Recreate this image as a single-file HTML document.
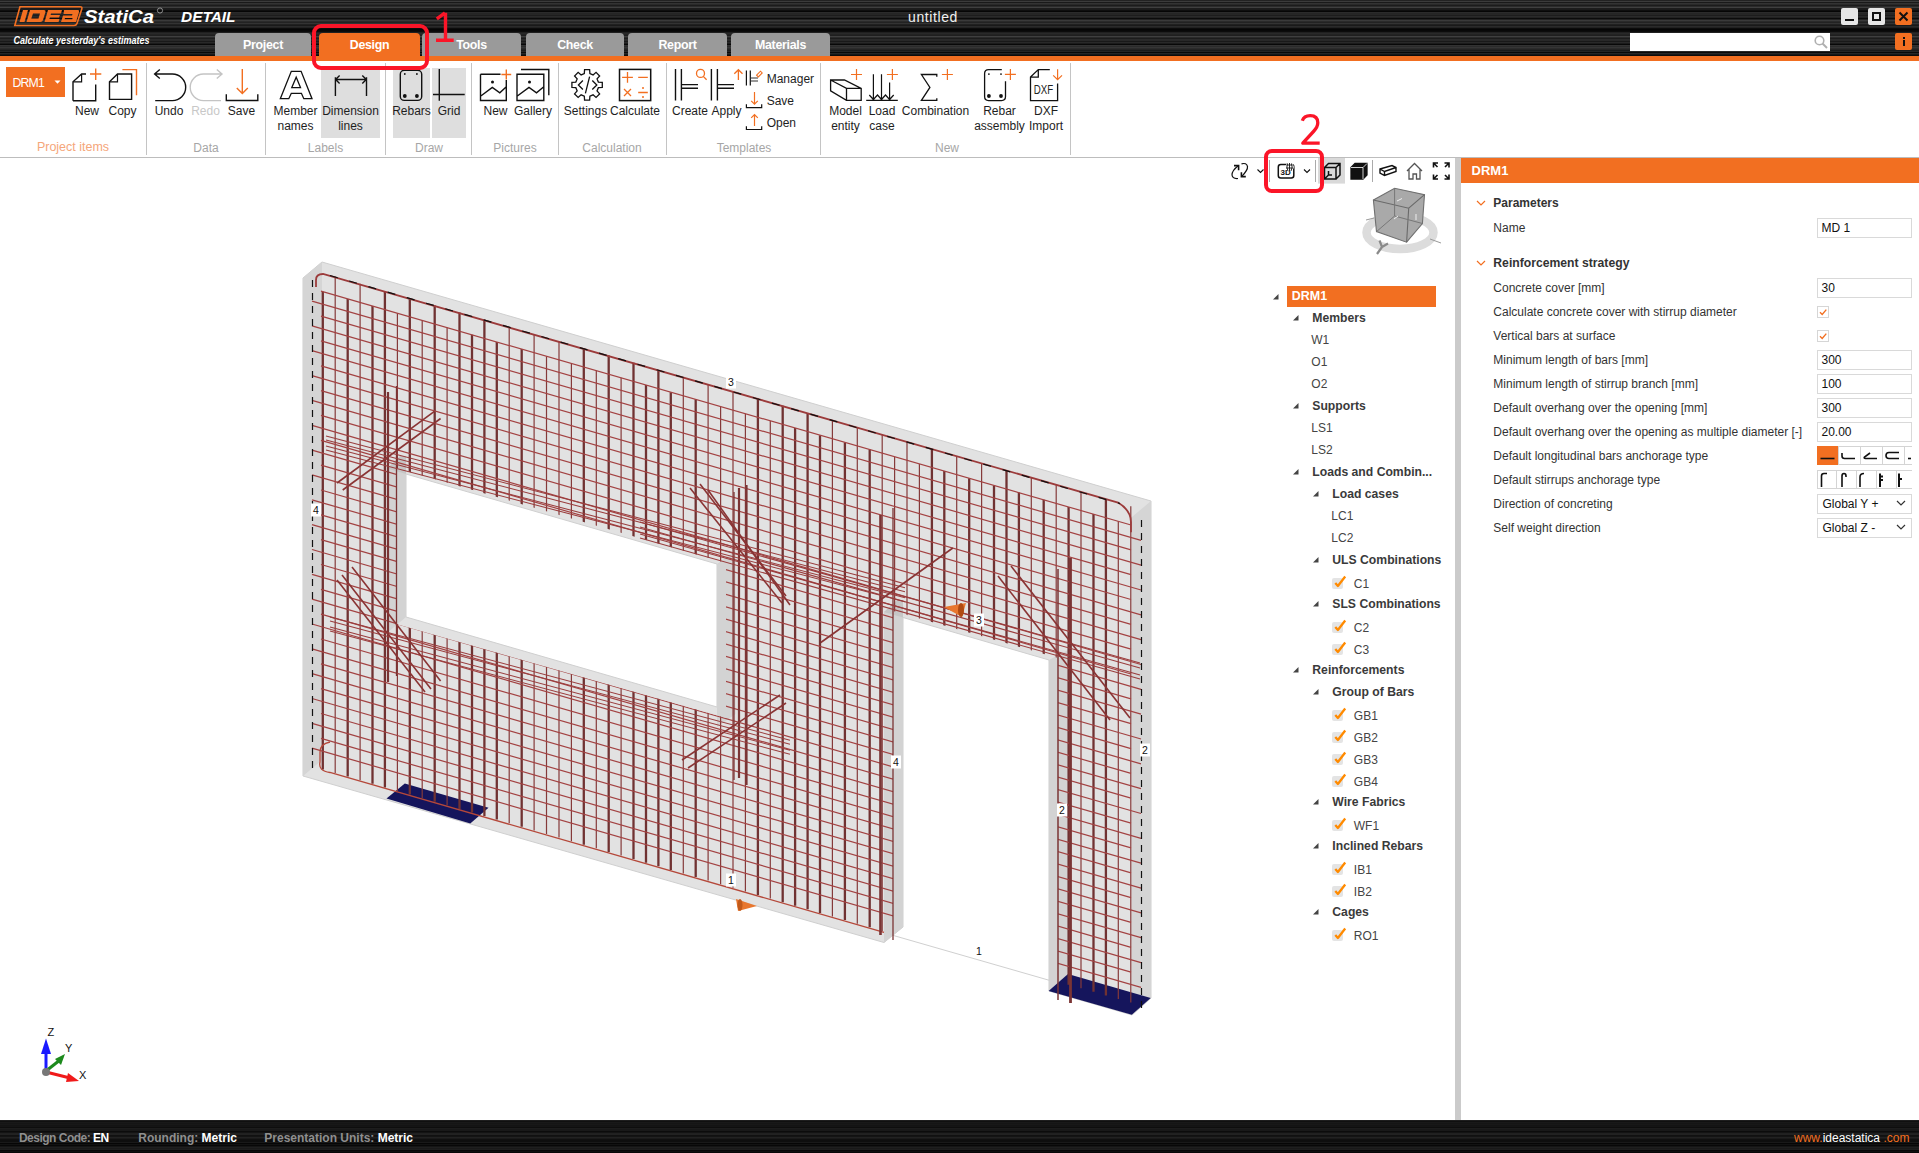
<!DOCTYPE html><html><head><meta charset="utf-8"><style>
*{margin:0;padding:0;box-sizing:content-box}
html,body{width:1919px;height:1153px;overflow:hidden;background:#fff;font-family:"Liberation Sans",sans-serif;position:relative}
.t{position:absolute;white-space:nowrap;line-height:1}
#hdr{position:absolute;left:0;top:0;width:1919px;height:56px;background:linear-gradient(180deg,#222222 0px,#222222 1px,#3b3b3b 1px,#3b3b3b 2px,#191919 2px,#191919 3px,#333333 3px,#333333 4px,#292929 4px,#292929 5px,#1b1b1b 5px,#1b1b1b 6px,#2a2a2a 6px,#2a2a2a 7px,#3f3f3f 7px,#3f3f3f 8px,#1c1c1c 8px,#1c1c1c 9px,#1b1b1b 9px,#1b1b1b 10px,#0e0e0e 10px,#0e0e0e 11px,#060606 11px,#060606 12px,#2b2b2b 12px,#2b2b2b 13px,#252525 13px,#252525 14px,#262626 14px,#262626 15px,#1d1d1d 15px,#1d1d1d 16px,#2a2a2a 16px,#2a2a2a 17px,#222222 17px,#222222 18px,#0b0b0b 18px,#0b0b0b 19px,#222222 19px,#222222 20px,#3a3a3a 20px,#3a3a3a 21px,#2a2a2a 21px,#2a2a2a 22px,#222222 22px,#222222 23px,#333333 23px,#333333 24px,#202020 24px,#202020 25px,#191919 25px,#191919 26px,#2a2a2a 26px,#2a2a2a 27px,#212121 27px,#212121 28px,#0c0c0c 28px,#0c0c0c 29px,#050505 29px,#050505 30px,#080808 30px,#080808 31px,#0c0c0c 31px,#0c0c0c 32px,#202020 32px,#202020 33px,#292929 33px,#292929 34px,#232323 34px,#232323 35px,#1f1f1f 35px,#1f1f1f 36px,#3f3f3f 36px,#3f3f3f 37px,#2a2a2a 37px,#2a2a2a 38px,#1c1c1c 38px,#1c1c1c 39px,#2a2a2a 39px,#2a2a2a 40px,#282828 40px,#282828 41px,#191919 41px,#191919 42px,#292929 42px,#292929 43px,#1b1b1b 43px,#1b1b1b 44px,#080808 44px,#080808 45px,#323232 45px,#323232 46px,#2a2a2a 46px,#2a2a2a 47px,#353535 47px,#353535 48px,#2b2b2b 48px,#2b2b2b 49px,#232323 49px,#232323 50px,#1b1b1b 50px,#1b1b1b 51px,#262626 51px,#262626 52px,#0a0a0a 52px,#0a0a0a 53px,#272727 53px,#272727 54px,#181818 54px,#181818 55px,#0d0d0d 55px,#0d0d0d 56px)}
#stat{position:absolute;left:0;top:1120px;width:1919px;height:33px;background:linear-gradient(180deg,#1e1e1e 0px,#1e1e1e 1px,#101010 1px,#101010 2px,#191919 2px,#191919 3px,#151515 3px,#151515 4px,#181818 4px,#181818 5px,#141414 5px,#141414 6px,#151515 6px,#151515 7px,#0e0e0e 7px,#0e0e0e 8px,#1d1d1d 8px,#1d1d1d 9px,#191919 9px,#191919 10px,#191919 10px,#191919 11px,#0c0c0c 11px,#0c0c0c 12px,#141414 12px,#141414 13px,#212121 13px,#212121 14px,#222222 14px,#222222 15px,#111111 15px,#111111 16px,#141414 16px,#141414 17px,#222222 17px,#222222 18px,#1a1a1a 18px,#1a1a1a 19px,#101010 19px,#101010 20px,#0e0e0e 20px,#0e0e0e 21px,#0e0e0e 21px,#0e0e0e 22px,#191919 22px,#191919 23px,#060606 23px,#060606 24px,#121212 24px,#121212 25px,#080808 25px,#080808 26px,#151515 26px,#151515 27px,#1f1f1f 27px,#1f1f1f 28px,#191919 28px,#191919 29px,#1e1e1e 29px,#1e1e1e 30px,#070707 30px,#070707 31px,#0e0e0e 31px,#0e0e0e 32px,#070707 32px,#070707 33px)}
</style></head><body>
<div id="hdr"></div>
<div style="position:absolute;left:0;top:56px;width:1919px;height:5px;background:#f26f21"></div>
<svg style="position:absolute;left:0;top:0" width="240" height="56">
<g transform="translate(14,6)">
<path d="M6 0.8 H66 Q68.5 0.8 67.8 3 L63 17.5 Q62.3 19.5 60 19.5 H0.8 L6 0.8Z" fill="none" stroke="#f26f21" stroke-width="1.6"/>
<path d="M9 4 H14 L10.5 16 H5.5Z" fill="#f26f21"/>
<path d="M16 4 H30 Q32 4 31.5 6 L29 14 Q28.5 16 26.5 16 H12.5Z M19 7.5 L17.3 12.5 H24.5 L26 7.5Z" fill="#f26f21" fill-rule="evenodd"/>
<path d="M34 4 H48 L47 7.5 H37 L36.6 9 H46 L45 11.5 H35.9 L35.4 13 H45.5 L44.6 16 H30.5Z" fill="#f26f21"/>
<path d="M50 4 H64 Q65.5 4 65 6 L62 16 H47 L49 9.5 H58 L58.5 8 H49.5Z M51 12 L50.6 13.3 H58.2 L58.6 12Z" fill="#f26f21" fill-rule="evenodd"/>
</g>
<text x="84" y="23" font-family="Liberation Sans" font-style="italic" font-weight="bold" font-size="18" fill="#fff" textLength="70" lengthAdjust="spacingAndGlyphs">StatiCa</text>
<circle cx="160" cy="10.5" r="2.6" fill="none" stroke="#aaa" stroke-width="0.8"/>
<text x="13.5" y="43.5" font-family="Liberation Sans" font-style="italic" font-weight="bold" font-size="10" fill="#fff" textLength="136" lengthAdjust="spacingAndGlyphs">Calculate yesterday's estimates</text>
<text x="181" y="22" font-family="Liberation Sans" font-style="italic" font-weight="bold" font-size="15.5" fill="#fff" textLength="54.5" lengthAdjust="spacingAndGlyphs">DETAIL</text>
</svg>
<div class="t" style="left:908px;top:9.95px;font-size:14px;font-weight:normal;color:#f0f0f0;letter-spacing:0.6px">untitled</div>
<div style="position:absolute;left:1841px;top:8px;width:17px;height:17px;background:#e6e6e6;border-radius:2px"><div style="position:absolute;left:4px;top:11px;width:9px;height:2px;background:#111"></div></div>
<div style="position:absolute;left:1868px;top:8px;width:17px;height:17px;background:#e6e6e6;border-radius:2px"><div style="position:absolute;left:4px;top:4px;width:5px;height:5px;border:2px solid #111"></div></div>
<div style="position:absolute;left:1895px;top:8px;width:17px;height:17px;background:#f26f21;border-radius:2px"><svg width="17" height="17"><path d="M4.5 4.5L12.5 12.5M12.5 4.5L4.5 12.5" stroke="#111" stroke-width="2"/></svg></div>
<div style="position:absolute;left:1895px;top:33px;width:17px;height:17px;background:#f26f21;border-radius:2px"><div style="position:absolute;left:7.5px;top:4px;width:2px;height:2px;background:#111"></div><div style="position:absolute;left:7.5px;top:7px;width:2px;height:6px;background:#111"></div></div>
<div style="position:absolute;left:1630px;top:33px;width:200px;height:18px;background:#fff"><svg style="position:absolute;left:183px;top:1px" width="16" height="16"><circle cx="6.5" cy="6.5" r="4.3" fill="none" stroke="#b0b0b0" stroke-width="1.6"/><path d="M9.5 9.5 L14 14" stroke="#b0b0b0" stroke-width="2"/></svg></div>
<div style="position:absolute;left:215px;top:33px;width:96px;height:23px;background:#9a9a9a;border-radius:4px 4px 0 0"></div>
<div class="t" style="left:63.0px;width:400px;text-align:center;top:38.80px;font-size:12.4px;font-weight:bold;color:#fff;letter-spacing:-0.3px">Project</div>
<div style="position:absolute;left:319px;top:33px;width:101px;height:23px;background:#f26f21;border-radius:4px 4px 0 0"></div>
<div class="t" style="left:169.5px;width:400px;text-align:center;top:38.80px;font-size:12.4px;font-weight:bold;color:#fff;letter-spacing:-0.3px">Design</div>
<div style="position:absolute;left:422px;top:33px;width:99px;height:23px;background:#9a9a9a;border-radius:4px 4px 0 0"></div>
<div class="t" style="left:271.5px;width:400px;text-align:center;top:38.80px;font-size:12.4px;font-weight:bold;color:#fff;letter-spacing:-0.3px">Tools</div>
<div style="position:absolute;left:526px;top:33px;width:98px;height:23px;background:#9a9a9a;border-radius:4px 4px 0 0"></div>
<div class="t" style="left:375.0px;width:400px;text-align:center;top:38.80px;font-size:12.4px;font-weight:bold;color:#fff;letter-spacing:-0.3px">Check</div>
<div style="position:absolute;left:628px;top:33px;width:99px;height:23px;background:#9a9a9a;border-radius:4px 4px 0 0"></div>
<div class="t" style="left:477.5px;width:400px;text-align:center;top:38.80px;font-size:12.4px;font-weight:bold;color:#fff;letter-spacing:-0.3px">Report</div>
<div style="position:absolute;left:731px;top:33px;width:99px;height:23px;background:#9a9a9a;border-radius:4px 4px 0 0"></div>
<div class="t" style="left:580.5px;width:400px;text-align:center;top:38.80px;font-size:12.4px;font-weight:bold;color:#fff;letter-spacing:-0.3px">Materials</div>
<div style="position:absolute;left:0;top:157px;width:1919px;height:1px;background:#bdbdbd"></div>
<div style="position:absolute;left:145.5px;top:63px;width:1px;height:92px;background:#c4c4c4"></div>
<div style="position:absolute;left:264.5px;top:63px;width:1px;height:92px;background:#c4c4c4"></div>
<div style="position:absolute;left:385.0px;top:63px;width:1px;height:92px;background:#c4c4c4"></div>
<div style="position:absolute;left:471.0px;top:63px;width:1px;height:92px;background:#c4c4c4"></div>
<div style="position:absolute;left:557.5px;top:63px;width:1px;height:92px;background:#c4c4c4"></div>
<div style="position:absolute;left:665.5px;top:63px;width:1px;height:92px;background:#c4c4c4"></div>
<div style="position:absolute;left:820.3px;top:63px;width:1px;height:92px;background:#c4c4c4"></div>
<div style="position:absolute;left:1070.0px;top:63px;width:1px;height:92px;background:#c4c4c4"></div>
<div style="position:absolute;left:321px;top:68px;width:59px;height:70px;background:#dedede"></div>
<div style="position:absolute;left:393px;top:68px;width:37px;height:70px;background:#dedede"></div>
<div style="position:absolute;left:432px;top:68px;width:34px;height:70px;background:#dedede"></div>
<div style="position:absolute;left:6px;top:67px;width:59px;height:30px;background:#f26f21"></div>
<div class="t" style="left:12.4px;top:76.79px;font-size:12.3px;font-weight:normal;color:#fff;letter-spacing:-0.8px">DRM1</div>
<svg style="position:absolute;left:54px;top:80px" width="8" height="5"><path d="M0.5 0.5H6.5L3.5 3.8Z" fill="#fff"/></svg>
<div class="t" style="left:-127px;width:400px;text-align:center;top:141.42px;font-size:12.5px;font-weight:normal;color:#f5a67a;">Project items</div>
<div class="t" style="left:6px;width:400px;text-align:center;top:141.84px;font-size:12px;font-weight:normal;color:#a6a6a6;">Data</div>
<div class="t" style="left:125.5px;width:400px;text-align:center;top:141.84px;font-size:12px;font-weight:normal;color:#a6a6a6;">Labels</div>
<div class="t" style="left:229px;width:400px;text-align:center;top:141.84px;font-size:12px;font-weight:normal;color:#a6a6a6;">Draw</div>
<div class="t" style="left:315px;width:400px;text-align:center;top:141.84px;font-size:12px;font-weight:normal;color:#a6a6a6;">Pictures</div>
<div class="t" style="left:412px;width:400px;text-align:center;top:141.84px;font-size:12px;font-weight:normal;color:#a6a6a6;">Calculation</div>
<div class="t" style="left:544px;width:400px;text-align:center;top:141.84px;font-size:12px;font-weight:normal;color:#a6a6a6;">Templates</div>
<div class="t" style="left:747px;width:400px;text-align:center;top:141.84px;font-size:12px;font-weight:normal;color:#a6a6a6;">New</div>
<div class="t" style="left:-113px;width:400px;text-align:center;top:104.84px;font-size:12px;font-weight:normal;color:#1e1e1e;">New</div>
<div class="t" style="left:-77.5px;width:400px;text-align:center;top:104.84px;font-size:12px;font-weight:normal;color:#1e1e1e;">Copy</div>
<div class="t" style="left:-31px;width:400px;text-align:center;top:104.84px;font-size:12px;font-weight:normal;color:#1e1e1e;">Undo</div>
<div class="t" style="left:5.5px;width:400px;text-align:center;top:104.84px;font-size:12px;font-weight:normal;color:#1e1e1e;"><span style="color:#c8c8c8">Redo</span></div>
<div class="t" style="left:41.5px;width:400px;text-align:center;top:104.84px;font-size:12px;font-weight:normal;color:#1e1e1e;">Save</div>
<div class="t" style="left:95.5px;width:400px;text-align:center;top:104.84px;font-size:12px;font-weight:normal;color:#1e1e1e;">Member</div>
<div class="t" style="left:95.5px;width:400px;text-align:center;top:120.04px;font-size:12px;font-weight:normal;color:#1e1e1e;">names</div>
<div class="t" style="left:150.5px;width:400px;text-align:center;top:104.84px;font-size:12px;font-weight:normal;color:#1e1e1e;">Dimension</div>
<div class="t" style="left:150.5px;width:400px;text-align:center;top:120.04px;font-size:12px;font-weight:normal;color:#1e1e1e;">lines</div>
<div class="t" style="left:211.5px;width:400px;text-align:center;top:104.84px;font-size:12px;font-weight:normal;color:#1e1e1e;">Rebars</div>
<div class="t" style="left:249px;width:400px;text-align:center;top:104.84px;font-size:12px;font-weight:normal;color:#1e1e1e;">Grid</div>
<div class="t" style="left:295.5px;width:400px;text-align:center;top:104.84px;font-size:12px;font-weight:normal;color:#1e1e1e;">New</div>
<div class="t" style="left:333px;width:400px;text-align:center;top:104.84px;font-size:12px;font-weight:normal;color:#1e1e1e;">Gallery</div>
<div class="t" style="left:385.5px;width:400px;text-align:center;top:104.84px;font-size:12px;font-weight:normal;color:#1e1e1e;">Settings</div>
<div class="t" style="left:435px;width:400px;text-align:center;top:104.84px;font-size:12px;font-weight:normal;color:#1e1e1e;">Calculate</div>
<div class="t" style="left:490px;width:400px;text-align:center;top:104.84px;font-size:12px;font-weight:normal;color:#1e1e1e;">Create</div>
<div class="t" style="left:526.5px;width:400px;text-align:center;top:104.84px;font-size:12px;font-weight:normal;color:#1e1e1e;">Apply</div>
<div class="t" style="left:645.5px;width:400px;text-align:center;top:104.84px;font-size:12px;font-weight:normal;color:#1e1e1e;">Model</div>
<div class="t" style="left:645.5px;width:400px;text-align:center;top:120.04px;font-size:12px;font-weight:normal;color:#1e1e1e;">entity</div>
<div class="t" style="left:682px;width:400px;text-align:center;top:104.84px;font-size:12px;font-weight:normal;color:#1e1e1e;">Load</div>
<div class="t" style="left:682px;width:400px;text-align:center;top:120.04px;font-size:12px;font-weight:normal;color:#1e1e1e;">case</div>
<div class="t" style="left:735.5px;width:400px;text-align:center;top:104.84px;font-size:12px;font-weight:normal;color:#1e1e1e;">Combination</div>
<div class="t" style="left:799.5px;width:400px;text-align:center;top:104.84px;font-size:12px;font-weight:normal;color:#1e1e1e;">Rebar</div>
<div class="t" style="left:799.5px;width:400px;text-align:center;top:120.04px;font-size:12px;font-weight:normal;color:#1e1e1e;">assembly</div>
<div class="t" style="left:846px;width:400px;text-align:center;top:104.84px;font-size:12px;font-weight:normal;color:#1e1e1e;">DXF</div>
<div class="t" style="left:846px;width:400px;text-align:center;top:120.04px;font-size:12px;font-weight:normal;color:#1e1e1e;">Import</div>
<div class="t" style="left:766.7px;top:73.04px;font-size:12px;font-weight:normal;color:#1e1e1e;">Manager</div>
<div class="t" style="left:766.7px;top:95.04px;font-size:12px;font-weight:normal;color:#1e1e1e;">Save</div>
<div class="t" style="left:766.7px;top:117.14px;font-size:12px;font-weight:normal;color:#1e1e1e;">Open</div>
<svg style="position:absolute;left:0;top:0" width="1100" height="157" fill="none" stroke="#111" stroke-width="1.4">
<!-- New -->
<path d="M73 100.8 V81.8 L81.6 74 H86 M95.7 84.6 V100.8 H73"/>
<path d="M73 81.8 H81.6 V74" stroke-width="1.2"/>
<path d="M95.7 68.5 V80 M90 74 H101.3" stroke="#f26f21"/>
<!-- Copy -->
<path d="M109.5 99.4 V81.8 L117.5 74 H131.6 V99.4 Z"/>
<path d="M109.5 81.8 H117.5 V74" stroke-width="1.2"/>
<path d="M122.4 69.6 H136.5 V95.2" stroke="#f26f21"/>
<!-- Undo -->
<path d="M154.6 74 H172.4 A13.3 13.3 0 0 1 172.4 100.6 H155.2 M159.8 69.5 L154.6 74 L159.8 78.5"/>
<!-- Redo -->
<path d="M222 74 H203.5 A13.3 13.3 0 0 0 203.5 100.6 H221 M216.8 69.5 L222 74 L216.8 78.5" stroke="#c4c4c4"/>
<!-- Save -->
<path d="M242.3 69 V93.6 M236.8 88 L242.3 93.6 L247.8 88" stroke="#f26f21"/>
<path d="M226.3 94.2 V100.5 H257.8 V94.2"/>
<!-- Member names A -->
<path d="M280.3 98.7 L291.3 71.3 H301.1 L312 98.7 H303.8 L301.4 93.3 H291.3 L288.8 98.7 Z M291.8 87.6 L296.2 77.2 L300.5 87.6 Z" stroke-width="1.3"/>
<!-- Dimension lines -->
<path d="M335.4 77.3 V96 M366.5 77.3 V96 M335.4 79.5 H366.5 M339.6 75.5 L335.6 79.5 L339.6 83.5 M362.3 75.5 L366.3 79.5 L362.3 83.5"/>
<!-- Rebars -->
<rect x="400.3" y="70.3" width="21.4" height="30.1" rx="4"/>
<!-- Grid -->
<path d="M439.3 69 V100.8 M433 94.5 H464.7"/>
<!-- Picture New -->
<path d="M480.5 74.3 H500.5 M506.3 80 V100.5 H480.5 V74.3 M480.5 96.3 L492.3 87.4 L499.8 92.8 L506.3 86.8"/>
<path d="M506.3 69.6 V79.4 M501.4 74.5 H511.2" stroke="#f26f21"/>
<!-- Gallery -->
<path d="M521 69.5 H548.8 V95.2 M517 74.3 H543.8 V100.5 H517 Z M517 96.3 L529 87.4 L536.5 92.8 L543.8 86.8"/>
<!-- Settings gear -->
<path d="M584.30 73.64 L584.57 69.71 L589.63 69.71 L589.90 73.64 L593.08 74.96 L596.05 72.37 L599.63 75.95 L597.04 78.92 L598.36 82.10 L602.29 82.37 L602.29 87.43 L598.36 87.70 L597.04 90.88 L599.63 93.85 L596.05 97.43 L593.08 94.84 L589.90 96.16 L589.63 100.09 L584.57 100.09 L584.30 96.16 L581.12 94.84 L578.15 97.43 L574.57 93.85 L577.16 90.88 L575.84 87.70 L571.91 87.43 L571.91 82.37 L575.84 82.10 L577.16 78.92 L574.57 75.95 L578.15 72.37 L581.12 74.96Z" stroke-width="1.3"/>
<path d="M582.9 80.5 L578.4 85 L582.9 89.5 M589.6 76.6 L585.4 93.4 M592.3 80.5 L596.8 85 L592.3 89.5" stroke-width="1.3"/>
<!-- Calculate -->
<rect x="619.5" y="69.4" width="31.2" height="31.2" stroke-width="1.5"/>
<path d="M627.5 72 V82.8 M622.1 77.4 H632.9 M638.2 77.4 H647.8 M624 89 L631 96 M631 89 L624 96 M638.2 92.5 H647.8" stroke="#f26f21" stroke-width="1.3"/>
<!-- Create -->
<path d="M675.5 69 V100.5 M681.4 69 V100.5 M681.4 84.6 H698 M681.4 88.3 H698"/>
<circle cx="700.5" cy="73.4" r="4" stroke="#f26f21" stroke-width="1.3"/>
<path d="M703.3 76.4 L706.6 79.8" stroke="#f26f21" stroke-width="1.3"/>
<!-- Apply -->
<path d="M711.4 69 V100.5 M717.4 69 V100.5 M717.4 84.6 H734 M717.4 88.3 H734"/>
<path d="M738.4 69.7 V80 M734.3 73.8 L738.4 69.7 L742.5 73.8" stroke="#f26f21" stroke-width="1.3"/>
<!-- Manager small -->
<path d="M746.4 70.4 V85.6 M750.3 70.4 V85.6" stroke-width="1.2"/>
<path d="M751 78 H758 M751 81 H758" stroke="#777" stroke-width="1.6"/>
<path d="M756.6 75.2 L760.5 71.2 L762.2 72.9 L758.3 76.9 Z" stroke="#f26f21" stroke-width="1.1"/>
<!-- Save small -->
<path d="M754.5 92 V104 M751.2 100.8 L754.5 104.2 L757.8 100.8" stroke="#f26f21" stroke-width="1.2"/>
<path d="M746.4 104.3 V107.6 H761.7 V104.3" stroke-width="1.2"/>
<!-- Open small -->
<path d="M754.5 126 V114.5 M751.2 117.8 L754.5 114.5 L757.8 117.8" stroke="#f26f21" stroke-width="1.2"/>
<path d="M746.4 126.2 V129.5 H761.7 V126.2" stroke-width="1.2"/>
<!-- Model entity -->
<path d="M830.6 80 H844.4 L861.2 88.4 V100.4 H846.5 L830.6 90.9 Z M830.6 80 L846.5 88.4 H861.2 M846.5 88.4 V100.4" stroke-width="1.3"/>
<path d="M856.5 69 V79.9 M851 74.5 H862" stroke="#f26f21" stroke-width="1.2"/>
<!-- Load case -->
<path d="M873.4 74.3 V99.5 M881.5 74.3 V99.5 M889.6 82.4 V99.5 M869.3 95 L873.4 99.5 L877.5 95 L881.5 99.5 L885.5 95 L889.6 99.5 L893.7 95 M866.2 100.3 H897.8" stroke-width="1.2"/>
<path d="M892.4 69 V79.9 M886.9 74.5 H897.9" stroke="#f26f21" stroke-width="1.2"/>
<!-- Combination -->
<path d="M936.8 76.8 V74.5 H921.4 L929.9 87.4 L921.4 100.4 H936.8 V98.2" stroke-width="1.3"/>
<path d="M947.4 69 V79.9 M941.9 74.5 H952.9" stroke="#f26f21" stroke-width="1.2"/>
<!-- Rebar assembly -->
<path d="M1001.8 69.6 H988.6 Q984.6 69.6 984.6 73.6 V96.6 Q984.6 100.6 988.6 100.6 H1001.5 Q1005.5 100.6 1005.5 96.6 V81.3" stroke-width="1.3"/>
<path d="M1010.4 68.9 V79.9 M1004.9 74.4 H1015.9" stroke="#f26f21" stroke-width="1.2"/>
<!-- DXF -->
<path d="M1049.8 69.6 H1038.3 L1030.5 77.1 V100.6 H1057.6 V83.4 M1030.5 77.1 H1038.3 V69.6" stroke-width="1.3"/>
<path d="M1057.6 69.3 V79.5 M1053.2 75.3 L1057.6 79.7 L1062 75.3" stroke="#f26f21" stroke-width="1.2"/>
</svg>
<svg style="position:absolute;left:0;top:0" width="1100" height="157">
<circle cx="404.8" cy="74" r="0.9" fill="#111"/><circle cx="416.9" cy="74" r="0.9" fill="#111"/>
<circle cx="404.8" cy="96" r="1.9" fill="#111"/><circle cx="416.9" cy="96" r="1.9" fill="#111"/>
<circle cx="492.5" cy="82" r="1.5" fill="#111"/><circle cx="529.5" cy="82" r="1.5" fill="#111"/>
<circle cx="643" cy="88" r="1" fill="#f26f21"/><circle cx="643" cy="97" r="1" fill="#f26f21"/>
<circle cx="988.9" cy="74.1" r="0.9" fill="#111"/><circle cx="1001" cy="74.1" r="0.9" fill="#111"/>
<circle cx="988.9" cy="96" r="1.9" fill="#111"/><circle cx="1001" cy="96" r="1.9" fill="#111"/>
<text x="1033.8" y="93.5" font-family="Liberation Sans" font-size="13.5" fill="#222" textLength="19.4" lengthAdjust="spacingAndGlyphs">DXF</text>
</svg>
<div style="position:absolute;left:1455px;top:158px;width:6px;height:962px;background:#cbcbcb"></div>
<div style="position:absolute;left:1461px;top:158px;width:458px;height:25px;background:#f26f21"></div>
<div class="t" style="left:1471.6px;top:164.30px;font-size:13px;font-weight:bold;color:#fff;">DRM1</div>
<svg style="position:absolute;left:1476px;top:199.5px" width="10" height="7"><path d="M1 1 L5 5 L9 1" fill="none" stroke="#f26f21" stroke-width="1.2"/></svg>
<div class="t" style="left:1493.3px;top:197.34px;font-size:12px;font-weight:bold;color:#333333;">Parameters</div>
<svg style="position:absolute;left:1476px;top:259.5px" width="10" height="7"><path d="M1 1 L5 5 L9 1" fill="none" stroke="#f26f21" stroke-width="1.2"/></svg>
<div class="t" style="left:1493.3px;top:257.17px;font-size:12.2px;font-weight:bold;color:#333333;">Reinforcement strategy</div>
<div class="t" style="left:1493.3px;top:222.34px;font-size:12px;font-weight:normal;color:#333333;">Name</div>
<div style="position:absolute;left:1817px;top:217.5px;width:93px;height:18px;border:1px solid #d9d9d9;background:#fff"></div>
<div class="t" style="left:1821.5px;top:222.14px;font-size:12px;font-weight:normal;color:#111;">MD 1</div>
<div class="t" style="left:1493.3px;top:282.34px;font-size:12px;font-weight:normal;color:#333333;">Concrete cover [mm]</div>
<div style="position:absolute;left:1817px;top:277.5px;width:93px;height:18px;border:1px solid #d9d9d9;background:#fff"></div>
<div class="t" style="left:1821.5px;top:282.14px;font-size:12px;font-weight:normal;color:#111;">30</div>
<div class="t" style="left:1493.3px;top:306.34px;font-size:12px;font-weight:normal;color:#333333;">Calculate concrete cover with stirrup diameter</div>
<div style="position:absolute;left:1817px;top:306.0px;width:10px;height:10px;border:1px solid #d6d6d6;background:#fff"></div>
<svg style="position:absolute;left:1817px;top:306.0px" width="12" height="12"><path d="M3 6.2 L5.2 8.4 L9.3 3.6" fill="none" stroke="#f26f21" stroke-width="1.4"/></svg>
<div class="t" style="left:1493.3px;top:330.34px;font-size:12px;font-weight:normal;color:#333333;">Vertical bars at surface</div>
<div style="position:absolute;left:1817px;top:330.0px;width:10px;height:10px;border:1px solid #d6d6d6;background:#fff"></div>
<svg style="position:absolute;left:1817px;top:330.0px" width="12" height="12"><path d="M3 6.2 L5.2 8.4 L9.3 3.6" fill="none" stroke="#f26f21" stroke-width="1.4"/></svg>
<div class="t" style="left:1493.3px;top:354.34px;font-size:12px;font-weight:normal;color:#333333;">Minimum length of bars [mm]</div>
<div style="position:absolute;left:1817px;top:349.5px;width:93px;height:18px;border:1px solid #d9d9d9;background:#fff"></div>
<div class="t" style="left:1821.5px;top:354.14px;font-size:12px;font-weight:normal;color:#111;">300</div>
<div class="t" style="left:1493.3px;top:378.34px;font-size:12px;font-weight:normal;color:#333333;">Minimum length of stirrup branch [mm]</div>
<div style="position:absolute;left:1817px;top:373.5px;width:93px;height:18px;border:1px solid #d9d9d9;background:#fff"></div>
<div class="t" style="left:1821.5px;top:378.14px;font-size:12px;font-weight:normal;color:#111;">100</div>
<div class="t" style="left:1493.3px;top:402.34px;font-size:12px;font-weight:normal;color:#333333;">Default overhang over the opening [mm]</div>
<div style="position:absolute;left:1817px;top:397.5px;width:93px;height:18px;border:1px solid #d9d9d9;background:#fff"></div>
<div class="t" style="left:1821.5px;top:402.14px;font-size:12px;font-weight:normal;color:#111;">300</div>
<div class="t" style="left:1493.3px;top:426.34px;font-size:12px;font-weight:normal;color:#333333;">Default overhang over the opening as multiple diameter [-]</div>
<div style="position:absolute;left:1817px;top:421.5px;width:93px;height:18px;border:1px solid #d9d9d9;background:#fff"></div>
<div class="t" style="left:1821.5px;top:426.14px;font-size:12px;font-weight:normal;color:#111;">20.00</div>
<div class="t" style="left:1493.3px;top:450.34px;font-size:12px;font-weight:normal;color:#333333;">Default longitudinal bars anchorage type</div>
<div style="position:absolute;left:1817px;top:445.5px;width:21px;height:19px;background:#f26f21"></div>
<div style="position:absolute;left:1838px;top:445.5px;width:22px;height:17px;border:1px solid #d4d4d4;border-right:none;background:#fff"></div>
<div style="position:absolute;left:1860px;top:445.5px;width:22px;height:17px;border:1px solid #d4d4d4;border-right:none;background:#fff"></div>
<div style="position:absolute;left:1882px;top:445.5px;width:22px;height:17px;border:1px solid #d4d4d4;border-right:none;background:#fff"></div>
<div style="position:absolute;left:1904px;top:445.5px;width:7px;height:17px;border:1px solid #d4d4d4;border-right:none;background:#fff"></div>
<svg style="position:absolute;left:1817px;top:445.5px" width="94" height="19" fill="none" stroke="#111" stroke-width="1.6">
<path d="M3.5 12.5 H17.5"/>
<path d="M25 7 V10 Q25 12.5 27.5 12.5 H38"/>
<path d="M53 7 L47.5 11 Q46.5 12.5 48.5 12.5 H60"/>
<path d="M82 6.5 H72 Q69 6.5 69 9.5 Q69 12.5 72 12.5 H82"/>
<path d="M91 12.5 H94"/>
</svg>
<div class="t" style="left:1493.3px;top:474.34px;font-size:12px;font-weight:normal;color:#333333;">Default stirrups anchorage type</div>
<div style="position:absolute;left:1817px;top:469.5px;width:19px;height:17px;border:1px solid #d4d4d4;border-right:none;background:#fff"></div>
<div style="position:absolute;left:1836px;top:469.5px;width:20px;height:17px;border:1px solid #d4d4d4;border-right:none;background:#fff"></div>
<div style="position:absolute;left:1856px;top:469.5px;width:20px;height:17px;border:1px solid #d4d4d4;border-right:none;background:#fff"></div>
<div style="position:absolute;left:1876px;top:469.5px;width:20px;height:17px;border:1px solid #d4d4d4;border-right:none;background:#fff"></div>
<div style="position:absolute;left:1896px;top:469.5px;width:15px;height:17px;border:1px solid #d4d4d4;border-right:none;background:#fff"></div>
<svg style="position:absolute;left:1817px;top:469.5px" width="94" height="19" fill="none" stroke="#111" stroke-width="1.6">
<path d="M4.5 17 V6 Q4.5 3.5 7 3.5 H10"/>
<path d="M25 17 V6 Q25 3.5 27 3.5 Q29 3.5 29 6 V7"/>
<path d="M43 17 V7 Q43 3.5 47 3.5"/>
<path d="M63 17 V3.5 M63 6.5 H66 M63 10 H66" stroke-width="2"/>
<path d="M82 17 V3.5 M82 9 H85" stroke-width="2"/>
</svg>
<div class="t" style="left:1493.3px;top:498.34px;font-size:12px;font-weight:normal;color:#333333;">Direction of concreting</div>
<div style="position:absolute;left:1817px;top:493.5px;width:93px;height:18px;border:1px solid #d9d9d9;background:#fff"></div>
<div class="t" style="left:1822.5px;top:498.14px;font-size:12px;font-weight:normal;color:#111;">Global Y +</div>
<svg style="position:absolute;left:1896px;top:499.5px" width="10" height="7"><path d="M1 1 L5 5 L9 1" fill="none" stroke="#333" stroke-width="1.2"/></svg>
<div class="t" style="left:1493.3px;top:522.34px;font-size:12px;font-weight:normal;color:#333333;">Self weight direction</div>
<div style="position:absolute;left:1817px;top:517.5px;width:93px;height:18px;border:1px solid #d9d9d9;background:#fff"></div>
<div class="t" style="left:1822.5px;top:522.14px;font-size:12px;font-weight:normal;color:#111;">Global Z -</div>
<svg style="position:absolute;left:1896px;top:523.5px" width="10" height="7"><path d="M1 1 L5 5 L9 1" fill="none" stroke="#333" stroke-width="1.2"/></svg>
<div style="position:absolute;left:1287px;top:286px;width:149px;height:21px;background:#f26f21"></div>
<svg style="position:absolute;left:1272px;top:293px" width="8" height="8"><path d="M6.5 1 V6.5 H1 Z" fill="#444"/></svg>
<div class="t" style="left:1291.8px;top:289.62px;font-size:12.5px;font-weight:bold;color:#fff;">DRM1</div>
<svg style="position:absolute;left:1292.3px;top:314.0px" width="8" height="8"><path d="M6.5 1 V6.5 H1 Z" fill="#444"/></svg>
<div class="t" style="left:1312.3px;top:312.17px;font-size:12.2px;font-weight:bold;color:#3a3a3a;">Members</div>
<div class="t" style="left:1311.3px;top:334.34px;font-size:12px;font-weight:normal;color:#444;">W1</div>
<div class="t" style="left:1311.3px;top:356.34px;font-size:12px;font-weight:normal;color:#444;">O1</div>
<div class="t" style="left:1311.3px;top:378.34px;font-size:12px;font-weight:normal;color:#444;">O2</div>
<svg style="position:absolute;left:1292.3px;top:402.0px" width="8" height="8"><path d="M6.5 1 V6.5 H1 Z" fill="#444"/></svg>
<div class="t" style="left:1312.3px;top:400.17px;font-size:12.2px;font-weight:bold;color:#3a3a3a;">Supports</div>
<div class="t" style="left:1311.3px;top:422.34px;font-size:12px;font-weight:normal;color:#444;">LS1</div>
<div class="t" style="left:1311.3px;top:444.34px;font-size:12px;font-weight:normal;color:#444;">LS2</div>
<svg style="position:absolute;left:1292.3px;top:468.0px" width="8" height="8"><path d="M6.5 1 V6.5 H1 Z" fill="#444"/></svg>
<div class="t" style="left:1312.3px;top:466.17px;font-size:12.2px;font-weight:bold;color:#3a3a3a;">Loads and Combin...</div>
<svg style="position:absolute;left:1312.3px;top:490.0px" width="8" height="8"><path d="M6.5 1 V6.5 H1 Z" fill="#444"/></svg>
<div class="t" style="left:1332.3px;top:488.17px;font-size:12.2px;font-weight:bold;color:#3a3a3a;">Load cases</div>
<div class="t" style="left:1331.3px;top:510.34px;font-size:12px;font-weight:normal;color:#444;">LC1</div>
<div class="t" style="left:1331.3px;top:532.34px;font-size:12px;font-weight:normal;color:#444;">LC2</div>
<svg style="position:absolute;left:1312.3px;top:556.0px" width="8" height="8"><path d="M6.5 1 V6.5 H1 Z" fill="#444"/></svg>
<div class="t" style="left:1332.3px;top:554.17px;font-size:12.2px;font-weight:bold;color:#3a3a3a;">ULS Combinations</div>
<div style="position:absolute;left:1332.3px;top:578.1px;width:10.7px;height:10.6px;background:#e4e4e4;border-radius:2px"></div><svg style="position:absolute;left:1332px;top:575.3px" width="16" height="14"><path d="M3.3 8 L5.9 11 L13.2 1.5" fill="none" stroke="#ff8a00" stroke-width="2.3" stroke-linejoin="round"/></svg>
<div class="t" style="left:1353.8px;top:578.34px;font-size:12px;font-weight:normal;color:#444;">C1</div>
<svg style="position:absolute;left:1312.3px;top:600.0px" width="8" height="8"><path d="M6.5 1 V6.5 H1 Z" fill="#444"/></svg>
<div class="t" style="left:1332.3px;top:598.17px;font-size:12.2px;font-weight:bold;color:#3a3a3a;">SLS Combinations</div>
<div style="position:absolute;left:1332.3px;top:622.1px;width:10.7px;height:10.6px;background:#e4e4e4;border-radius:2px"></div><svg style="position:absolute;left:1332px;top:619.3px" width="16" height="14"><path d="M3.3 8 L5.9 11 L13.2 1.5" fill="none" stroke="#ff8a00" stroke-width="2.3" stroke-linejoin="round"/></svg>
<div class="t" style="left:1353.8px;top:622.34px;font-size:12px;font-weight:normal;color:#444;">C2</div>
<div style="position:absolute;left:1332.3px;top:644.1px;width:10.7px;height:10.6px;background:#e4e4e4;border-radius:2px"></div><svg style="position:absolute;left:1332px;top:641.3px" width="16" height="14"><path d="M3.3 8 L5.9 11 L13.2 1.5" fill="none" stroke="#ff8a00" stroke-width="2.3" stroke-linejoin="round"/></svg>
<div class="t" style="left:1353.8px;top:644.34px;font-size:12px;font-weight:normal;color:#444;">C3</div>
<svg style="position:absolute;left:1292.3px;top:666.0px" width="8" height="8"><path d="M6.5 1 V6.5 H1 Z" fill="#444"/></svg>
<div class="t" style="left:1312.3px;top:664.17px;font-size:12.2px;font-weight:bold;color:#3a3a3a;">Reinforcements</div>
<svg style="position:absolute;left:1312.3px;top:688.0px" width="8" height="8"><path d="M6.5 1 V6.5 H1 Z" fill="#444"/></svg>
<div class="t" style="left:1332.3px;top:686.17px;font-size:12.2px;font-weight:bold;color:#3a3a3a;">Group of Bars</div>
<div style="position:absolute;left:1332.3px;top:710.1px;width:10.7px;height:10.6px;background:#e4e4e4;border-radius:2px"></div><svg style="position:absolute;left:1332px;top:707.3px" width="16" height="14"><path d="M3.3 8 L5.9 11 L13.2 1.5" fill="none" stroke="#ff8a00" stroke-width="2.3" stroke-linejoin="round"/></svg>
<div class="t" style="left:1353.8px;top:710.34px;font-size:12px;font-weight:normal;color:#444;">GB1</div>
<div style="position:absolute;left:1332.3px;top:732.1px;width:10.7px;height:10.6px;background:#e4e4e4;border-radius:2px"></div><svg style="position:absolute;left:1332px;top:729.3px" width="16" height="14"><path d="M3.3 8 L5.9 11 L13.2 1.5" fill="none" stroke="#ff8a00" stroke-width="2.3" stroke-linejoin="round"/></svg>
<div class="t" style="left:1353.8px;top:732.34px;font-size:12px;font-weight:normal;color:#444;">GB2</div>
<div style="position:absolute;left:1332.3px;top:754.1px;width:10.7px;height:10.6px;background:#e4e4e4;border-radius:2px"></div><svg style="position:absolute;left:1332px;top:751.3px" width="16" height="14"><path d="M3.3 8 L5.9 11 L13.2 1.5" fill="none" stroke="#ff8a00" stroke-width="2.3" stroke-linejoin="round"/></svg>
<div class="t" style="left:1353.8px;top:754.34px;font-size:12px;font-weight:normal;color:#444;">GB3</div>
<div style="position:absolute;left:1332.3px;top:776.1px;width:10.7px;height:10.6px;background:#e4e4e4;border-radius:2px"></div><svg style="position:absolute;left:1332px;top:773.3px" width="16" height="14"><path d="M3.3 8 L5.9 11 L13.2 1.5" fill="none" stroke="#ff8a00" stroke-width="2.3" stroke-linejoin="round"/></svg>
<div class="t" style="left:1353.8px;top:776.34px;font-size:12px;font-weight:normal;color:#444;">GB4</div>
<svg style="position:absolute;left:1312.3px;top:798.0px" width="8" height="8"><path d="M6.5 1 V6.5 H1 Z" fill="#444"/></svg>
<div class="t" style="left:1332.3px;top:796.17px;font-size:12.2px;font-weight:bold;color:#3a3a3a;">Wire Fabrics</div>
<div style="position:absolute;left:1332.3px;top:820.1px;width:10.7px;height:10.6px;background:#e4e4e4;border-radius:2px"></div><svg style="position:absolute;left:1332px;top:817.3px" width="16" height="14"><path d="M3.3 8 L5.9 11 L13.2 1.5" fill="none" stroke="#ff8a00" stroke-width="2.3" stroke-linejoin="round"/></svg>
<div class="t" style="left:1353.8px;top:820.34px;font-size:12px;font-weight:normal;color:#444;">WF1</div>
<svg style="position:absolute;left:1312.3px;top:842.0px" width="8" height="8"><path d="M6.5 1 V6.5 H1 Z" fill="#444"/></svg>
<div class="t" style="left:1332.3px;top:840.17px;font-size:12.2px;font-weight:bold;color:#3a3a3a;">Inclined Rebars</div>
<div style="position:absolute;left:1332.3px;top:864.1px;width:10.7px;height:10.6px;background:#e4e4e4;border-radius:2px"></div><svg style="position:absolute;left:1332px;top:861.3px" width="16" height="14"><path d="M3.3 8 L5.9 11 L13.2 1.5" fill="none" stroke="#ff8a00" stroke-width="2.3" stroke-linejoin="round"/></svg>
<div class="t" style="left:1353.8px;top:864.34px;font-size:12px;font-weight:normal;color:#444;">IB1</div>
<div style="position:absolute;left:1332.3px;top:886.1px;width:10.7px;height:10.6px;background:#e4e4e4;border-radius:2px"></div><svg style="position:absolute;left:1332px;top:883.3px" width="16" height="14"><path d="M3.3 8 L5.9 11 L13.2 1.5" fill="none" stroke="#ff8a00" stroke-width="2.3" stroke-linejoin="round"/></svg>
<div class="t" style="left:1353.8px;top:886.34px;font-size:12px;font-weight:normal;color:#444;">IB2</div>
<svg style="position:absolute;left:1312.3px;top:908.0px" width="8" height="8"><path d="M6.5 1 V6.5 H1 Z" fill="#444"/></svg>
<div class="t" style="left:1332.3px;top:906.17px;font-size:12.2px;font-weight:bold;color:#3a3a3a;">Cages</div>
<div style="position:absolute;left:1332.3px;top:930.1px;width:10.7px;height:10.6px;background:#e4e4e4;border-radius:2px"></div><svg style="position:absolute;left:1332px;top:927.3px" width="16" height="14"><path d="M3.3 8 L5.9 11 L13.2 1.5" fill="none" stroke="#ff8a00" stroke-width="2.3" stroke-linejoin="round"/></svg>
<div class="t" style="left:1353.8px;top:930.34px;font-size:12px;font-weight:normal;color:#444;">RO1</div>
<div id="stat"></div>
<div class="t" style="left:18.9px;top:1131.84px;font-size:12px;font-weight:bold;color:#fff;letter-spacing:-0.5px"><span style="color:#8f8f8f">Design Code:</span> EN</div>
<div class="t" style="left:138.3px;top:1131.84px;font-size:12px;font-weight:bold;color:#fff;"><span style="color:#8f8f8f">Rounding:</span> Metric</div>
<div class="t" style="left:264.3px;top:1131.84px;font-size:12px;font-weight:bold;color:#fff;"><span style="color:#8f8f8f">Presentation Units:</span> Metric</div>
<div class="t" style="left:1794px;top:1131.84px;font-size:12px;font-weight:normal;color:#fff;"><span style="color:#f26f21">www.</span>ideastatica <span style="color:#f26f21">.com</span></div>
<svg style="position:absolute;left:1220px;top:158px" width="235" height="36" fill="none" stroke="#111" stroke-width="1.3">
<rect x="98" y="0" width="27" height="25.6" fill="#d9d9d9" stroke="none"/>
<!-- rotate -->
<path d="M18.3 7.8 Q12 12.5 12 17 Q12.5 21 18 20.5" stroke-width="1.2"/>
<path d="M14 7.6 H18.6 V12.2" stroke-width="1.6"/>
<path d="M21.5 5.8 Q26.5 4.5 27.5 8.5 Q28 12 21.8 18.3" stroke-width="1.2"/>
<path d="M25.8 18.6 H21.4 V14.2" stroke-width="1.6"/>
<path d="M37.5 11.5 L40.5 14.5 L43.5 11.5" stroke-width="1.1"/>
<path d="M49.5 2 V24 M95.5 2 V24 M152.5 2 V24" stroke="#aaa" stroke-width="1"/>
<!-- 3D view icon -->
<rect x="58.3" y="6.5" width="15.5" height="13.5" rx="2.5" stroke-width="1.5"/>
<text x="60.5" y="17.2" font-family="Liberation Sans" font-weight="bold" font-size="8" fill="#111" stroke="none">3D</text>
<circle cx="69.5" cy="9" r="3.8" fill="#fff" stroke="#fff" stroke-width="1"/><path d="M66.5 7 H72.5 M66 10 H73 M69.5 5 V13.5 M67.5 5.5 Q66 9 68 13 M71.5 5.5 Q73 9 71 13" stroke-width="0.9"/>
<path d="M84 11.5 L87 14.5 L90 11.5" stroke-width="1.1"/>
<!-- wire cube -->
<path d="M104.5 9.5 H116 V21 H104.5 Z M104.5 9.5 L108.5 5.5 H120 V17 L116 21 M116 9.5 L120 5.5 M108.5 13 V17 H112 M108.5 17 L104.5 21" stroke-width="1.5"/>
<!-- solid cube -->
<path d="M131 9.5 L135 5.5 H147 V17 L143 21 H131 Z" fill="#111" stroke="#111"/>
<path d="M143 9.5 L147 5.5 M131 9.5 H143 V21" stroke="#fff" stroke-width="0.8"/>
<!-- beam -->
<path d="M160 11 L172 7.5 L176 9.5 V13.5 L164.5 17.5 L160 15 Z M160 11 L164.5 13.5 L176 9.5 M164.5 13.5 V17.5" stroke-width="1.4"/>
<!-- home -->
<path d="M187 13 L194.5 5.5 L202 13 M189 11.5 V21 H193 V16 H196.5 V21 H200 V11.5" stroke="#555" stroke-width="1.3"/>
<!-- fullscreen -->
<path d="M213.5 9.5 V5 H218 M213.5 5 L217.5 9 M229 9.5 V5 H224.5 M229 5 L225 9 M213.5 16.5 V21 H218 M213.5 21 L217.5 17 M229 16.5 V21 H224.5 M229 21 L225 17" stroke-width="1.6"/>
</svg>
<svg style="position:absolute;left:1355px;top:183px" width="90" height="75">
<ellipse cx="45" cy="49.5" rx="33.5" ry="16.5" fill="none" stroke="#dcdcdc" stroke-width="8.5"/>
<path d="M18.4 17 L39.6 5.3 L69.5 11.6 L67.4 40.5 L51.6 59.2 L21.5 48.6 Z" fill="#a9a9a9" stroke="#707070" stroke-width="1.1"/>
<path d="M18.4 17 L53.7 25.2 L69.5 11.6 M53.7 25.2 L51.6 59.2" fill="none" stroke="#6a6a6a" stroke-width="1.1"/>
<path d="M39.6 5.3 V33 L21.5 48.6 M39.6 33 L67.4 40.5" fill="none" stroke="#777" stroke-width="1"/>
<path d="M22 71 L27 64 M27 64 L33 60.5 M27 64 L24.5 57.5" stroke="#8a8a8a" stroke-width="2.2"/>
<path d="M11 37 L19 35 M75 56 L86 60" stroke="#999" stroke-width="1"/>
<path d="M42 18 L47 15.5 M43 33 L39 36 M61 31 V37" stroke="#eee" stroke-width="1"/>
</svg>
<div style="position:absolute;left:312px;top:23.6px;width:108.9px;height:38.1px;border:4px solid #fb1528;border-radius:9px"></div>
<div style="position:absolute;left:1264px;top:149px;width:51.8px;height:35.7px;border:4px solid #fb1528;border-radius:8px"></div>
<svg style="position:absolute;left:0;top:0" width="470" height="50"><path d="M445.5 12.8 V40 M445 12.8 L436.8 18.8 M436 40.2 H453.7" fill="none" stroke="#fb1528" stroke-width="3.4"/></svg>
<svg style="position:absolute;left:1280px;top:100px" width="50" height="50"><path d="M22.3 20.8 Q24 15.6 30.2 15.6 Q37.8 15.6 37.8 22.8 Q37.8 27 33.5 31.5 L22.8 43.2 H39.7" fill="none" stroke="#fb1528" stroke-width="3.3" stroke-linejoin="round"/></svg>
<svg style="position:absolute;left:30px;top:1020px" width="70" height="70">
<path d="M16 52 V30" stroke="#1a1aff" stroke-width="3"/>
<path d="M11 34 L16 18.5 L21 34 Z" fill="#1a1aff"/>
<path d="M16 51 L30 40" stroke="#1d8a1d" stroke-width="3"/>
<path d="M25 39 L35 34 L31 45 Z" fill="#1d8a1d"/>
<path d="M16 52 L40 58" stroke="#f01a1a" stroke-width="3"/>
<path d="M38 53 L49 61 L36 62 Z" fill="#f01a1a"/>
<circle cx="16" cy="52" r="4" fill="#777"/>
<text x="17.5" y="16" font-family="Liberation Sans" font-size="11" fill="#111">Z</text>
<text x="35" y="32" font-family="Liberation Sans" font-size="11" fill="#111">Y</text>
<text x="49" y="59" font-family="Liberation Sans" font-size="11" fill="#111">X</text>
</svg>
<svg style="position:absolute;left:0;top:158px" width="1455" height="962" viewBox="0 158 1455 962">
<defs><clipPath id="holes"><path clip-rule="evenodd" d="M290 240 H1170 V1040 H290 Z M396 468 L726 563 L726 718 L396 624 Z M893 611 L1058 658 L1058 1040 L893 1040 Z"/></clipPath></defs>
<polygon points="303.0,278.0 322.0,262.0 1151.0,501.0 1151.0,998.0 1132.0,1015.0 1049.0,991.0 1049.0,660.0 903.0,617.5 903.0,927.0 884.0,942.5 303.0,776.0" fill="#e2e2e2" stroke="#cfcfcf" stroke-width="1"/>
<polygon points="406.0,474.0 717.0,564.0 717.0,707.0 406.0,617.0" fill="#fff" stroke="#cfcfcf" stroke-width="1"/>
<polygon points="303.0,278.0 322.0,262.0 322.0,760.0 303.0,776.0" fill="#d5d5d5"/>
<polygon points="1132.0,517.0 1151.0,501.0 1151.0,998.0 1132.0,1015.0" fill="#d5d5d5"/>
<polygon points="387.0,468.5 406.0,456.0 406.0,617.0 387.0,633.0" fill="#d3d3d3"/>
<polygon points="717.0,564.0 735.5,551.0 735.5,714.0 717.0,727.0" fill="#d3d3d3"/>
<polygon points="884.0,612.0 903.0,600.0 903.0,927.0 884.0,942.5" fill="#d3d3d3"/>
<polygon points="1049.0,660.0 1068.0,650.0 1068.0,975.0 1049.0,991.0" fill="#d3d3d3"/>
<polygon points="387.0,468.5 400.0,456.0 406.0,456.0 406.0,474.0" fill="#c6c6c6"/>
<polygon points="884.0,612.0 897.0,600.0 903.0,600.0 903.0,617.5" fill="#c6c6c6"/>
<polygon points="386.5,798.6 404.8,783.4 488.5,807.8 470.3,823.4" fill="#15155c"/>
<polygon points="1048.6,991.0 1068.0,974.0 1150.7,998.0 1131.8,1014.7" fill="#15155c"/>
<path d="M890 934.5 L1050 980.5" stroke="#d0d0d0" stroke-width="1"/>
<g clip-path="url(#holes)">
<line x1="322.8" y1="291.7" x2="322.8" y2="769.4" stroke="#703232" stroke-width="2.3"/>
<line x1="335.2" y1="276.7" x2="335.2" y2="773.0" stroke="#853a3a" stroke-width="1.2"/>
<line x1="347.7" y1="298.9" x2="347.7" y2="776.6" stroke="#703232" stroke-width="2.3"/>
<line x1="360.1" y1="283.8" x2="360.1" y2="780.2" stroke="#853a3a" stroke-width="1.2"/>
<line x1="372.5" y1="306.1" x2="372.5" y2="783.8" stroke="#703232" stroke-width="2.3"/>
<line x1="384.9" y1="291.0" x2="384.9" y2="787.4" stroke="#703232" stroke-width="2.3"/>
<line x1="397.4" y1="313.2" x2="397.4" y2="790.9" stroke="#853a3a" stroke-width="1.2"/>
<line x1="409.8" y1="298.2" x2="409.8" y2="794.5" stroke="#703232" stroke-width="2.3"/>
<line x1="422.2" y1="320.4" x2="422.2" y2="798.1" stroke="#853a3a" stroke-width="1.2"/>
<line x1="434.7" y1="305.4" x2="434.7" y2="801.7" stroke="#703232" stroke-width="2.3"/>
<line x1="447.1" y1="327.6" x2="447.1" y2="805.3" stroke="#853a3a" stroke-width="1.2"/>
<line x1="459.5" y1="312.5" x2="459.5" y2="808.9" stroke="#703232" stroke-width="2.3"/>
<line x1="472.0" y1="334.8" x2="472.0" y2="812.5" stroke="#703232" stroke-width="2.3"/>
<line x1="484.4" y1="319.7" x2="484.4" y2="816.1" stroke="#703232" stroke-width="2.3"/>
<line x1="496.8" y1="341.9" x2="496.8" y2="819.6" stroke="#703232" stroke-width="2.3"/>
<line x1="509.2" y1="326.9" x2="509.2" y2="823.2" stroke="#853a3a" stroke-width="1.2"/>
<line x1="521.7" y1="349.1" x2="521.7" y2="826.8" stroke="#703232" stroke-width="2.3"/>
<line x1="534.1" y1="334.1" x2="534.1" y2="830.4" stroke="#853a3a" stroke-width="1.2"/>
<line x1="546.5" y1="356.3" x2="546.5" y2="834.0" stroke="#853a3a" stroke-width="1.2"/>
<line x1="559.0" y1="341.2" x2="559.0" y2="837.6" stroke="#853a3a" stroke-width="1.2"/>
<line x1="571.4" y1="363.5" x2="571.4" y2="841.2" stroke="#853a3a" stroke-width="1.2"/>
<line x1="583.8" y1="348.4" x2="583.8" y2="844.8" stroke="#703232" stroke-width="2.3"/>
<line x1="596.3" y1="370.6" x2="596.3" y2="848.3" stroke="#853a3a" stroke-width="1.2"/>
<line x1="608.7" y1="355.6" x2="608.7" y2="851.9" stroke="#703232" stroke-width="2.3"/>
<line x1="621.1" y1="377.8" x2="621.1" y2="855.5" stroke="#853a3a" stroke-width="1.2"/>
<line x1="633.5" y1="362.8" x2="633.5" y2="859.1" stroke="#703232" stroke-width="2.3"/>
<line x1="646.0" y1="385.0" x2="646.0" y2="862.7" stroke="#703232" stroke-width="2.3"/>
<line x1="658.4" y1="369.9" x2="658.4" y2="866.3" stroke="#703232" stroke-width="2.3"/>
<line x1="670.8" y1="392.2" x2="670.8" y2="869.9" stroke="#703232" stroke-width="2.3"/>
<line x1="683.3" y1="377.1" x2="683.3" y2="873.5" stroke="#853a3a" stroke-width="1.2"/>
<line x1="695.7" y1="399.3" x2="695.7" y2="877.0" stroke="#703232" stroke-width="2.3"/>
<line x1="708.1" y1="384.3" x2="708.1" y2="880.6" stroke="#853a3a" stroke-width="1.2"/>
<line x1="720.6" y1="406.5" x2="720.6" y2="884.2" stroke="#853a3a" stroke-width="1.2"/>
<line x1="733.0" y1="391.5" x2="733.0" y2="887.8" stroke="#853a3a" stroke-width="1.2"/>
<line x1="745.4" y1="413.7" x2="745.4" y2="891.4" stroke="#853a3a" stroke-width="1.2"/>
<line x1="757.9" y1="398.6" x2="757.9" y2="895.0" stroke="#703232" stroke-width="2.3"/>
<line x1="770.3" y1="420.9" x2="770.3" y2="898.6" stroke="#853a3a" stroke-width="1.2"/>
<line x1="782.7" y1="405.8" x2="782.7" y2="902.2" stroke="#703232" stroke-width="2.3"/>
<line x1="795.1" y1="428.0" x2="795.1" y2="905.7" stroke="#703232" stroke-width="2.3"/>
<line x1="807.6" y1="413.0" x2="807.6" y2="909.3" stroke="#703232" stroke-width="2.3"/>
<line x1="820.0" y1="435.2" x2="820.0" y2="912.9" stroke="#703232" stroke-width="2.3"/>
<line x1="832.4" y1="420.2" x2="832.4" y2="916.5" stroke="#853a3a" stroke-width="1.2"/>
<line x1="844.9" y1="442.4" x2="844.9" y2="920.1" stroke="#703232" stroke-width="2.3"/>
<line x1="857.3" y1="427.3" x2="857.3" y2="923.7" stroke="#853a3a" stroke-width="1.2"/>
<line x1="869.7" y1="449.6" x2="869.7" y2="927.3" stroke="#703232" stroke-width="2.3"/>
<line x1="882.2" y1="434.5" x2="882.2" y2="930.9" stroke="#853a3a" stroke-width="1.2"/>
<line x1="894.6" y1="456.7" x2="894.6" y2="934.4" stroke="#853a3a" stroke-width="1.2"/>
<line x1="907.0" y1="441.7" x2="907.0" y2="938.0" stroke="#853a3a" stroke-width="1.2"/>
<line x1="919.4" y1="463.9" x2="919.4" y2="941.6" stroke="#853a3a" stroke-width="1.2"/>
<line x1="931.9" y1="448.9" x2="931.9" y2="945.2" stroke="#703232" stroke-width="2.3"/>
<line x1="944.3" y1="471.1" x2="944.3" y2="948.8" stroke="#703232" stroke-width="2.3"/>
<line x1="956.7" y1="456.0" x2="956.7" y2="952.4" stroke="#853a3a" stroke-width="1.2"/>
<line x1="969.2" y1="478.3" x2="969.2" y2="956.0" stroke="#703232" stroke-width="2.3"/>
<line x1="981.6" y1="463.2" x2="981.6" y2="959.5" stroke="#853a3a" stroke-width="1.2"/>
<line x1="994.0" y1="485.4" x2="994.0" y2="963.1" stroke="#703232" stroke-width="2.3"/>
<line x1="1006.5" y1="470.4" x2="1006.5" y2="966.7" stroke="#703232" stroke-width="2.3"/>
<line x1="1018.9" y1="492.6" x2="1018.9" y2="970.3" stroke="#703232" stroke-width="2.3"/>
<line x1="1031.3" y1="477.6" x2="1031.3" y2="973.9" stroke="#853a3a" stroke-width="1.2"/>
<line x1="1043.7" y1="499.8" x2="1043.7" y2="977.5" stroke="#703232" stroke-width="2.3"/>
<line x1="1056.2" y1="484.7" x2="1056.2" y2="981.1" stroke="#853a3a" stroke-width="1.2"/>
<line x1="1068.6" y1="507.0" x2="1068.6" y2="984.7" stroke="#703232" stroke-width="2.3"/>
<line x1="1081.0" y1="491.9" x2="1081.0" y2="988.2" stroke="#853a3a" stroke-width="1.2"/>
<line x1="1093.5" y1="514.1" x2="1093.5" y2="991.8" stroke="#703232" stroke-width="2.3"/>
<line x1="1105.9" y1="499.1" x2="1105.9" y2="995.4" stroke="#703232" stroke-width="2.3"/>
<line x1="1118.3" y1="521.3" x2="1118.3" y2="999.0" stroke="#853a3a" stroke-width="1.2"/>
<line x1="1130.8" y1="506.3" x2="1130.8" y2="1002.6" stroke="#853a3a" stroke-width="1.2"/>
<line x1="321" y1="291.2" x2="1131" y2="525.0" stroke="#a34242" stroke-width="1.2"/>
<line x1="312" y1="301.1" x2="1141" y2="540.3" stroke="#a34242" stroke-width="1.2"/>
<line x1="321" y1="316.1" x2="1131" y2="549.8" stroke="#a34242" stroke-width="1.2"/>
<line x1="312" y1="325.9" x2="1141" y2="565.1" stroke="#a34242" stroke-width="1.2"/>
<line x1="321" y1="340.9" x2="1131" y2="574.7" stroke="#a34242" stroke-width="1.2"/>
<line x1="312" y1="350.7" x2="1141" y2="590.0" stroke="#a34242" stroke-width="1.2"/>
<line x1="321" y1="365.8" x2="1131" y2="599.5" stroke="#a34242" stroke-width="1.2"/>
<line x1="312" y1="375.6" x2="1141" y2="614.8" stroke="#a34242" stroke-width="1.2"/>
<line x1="321" y1="390.6" x2="1131" y2="624.4" stroke="#a34242" stroke-width="1.2"/>
<line x1="312" y1="400.4" x2="1141" y2="639.7" stroke="#a34242" stroke-width="1.2"/>
<line x1="321" y1="415.4" x2="1131" y2="649.2" stroke="#a34242" stroke-width="1.2"/>
<line x1="312" y1="425.3" x2="1141" y2="664.5" stroke="#a34242" stroke-width="1.2"/>
<line x1="321" y1="440.3" x2="1131" y2="674.0" stroke="#a34242" stroke-width="1.2"/>
<line x1="312" y1="450.1" x2="1141" y2="689.3" stroke="#a34242" stroke-width="1.2"/>
<line x1="321" y1="465.1" x2="1131" y2="698.9" stroke="#a34242" stroke-width="1.2"/>
<line x1="312" y1="474.9" x2="1141" y2="714.2" stroke="#a34242" stroke-width="1.2"/>
<line x1="321" y1="490.0" x2="1131" y2="723.7" stroke="#a34242" stroke-width="1.2"/>
<line x1="312" y1="499.8" x2="1141" y2="739.0" stroke="#a34242" stroke-width="1.2"/>
<line x1="321" y1="514.8" x2="1131" y2="748.6" stroke="#a34242" stroke-width="1.2"/>
<line x1="312" y1="524.6" x2="1141" y2="763.9" stroke="#a34242" stroke-width="1.2"/>
<line x1="321" y1="539.6" x2="1131" y2="773.4" stroke="#a34242" stroke-width="1.2"/>
<line x1="312" y1="549.5" x2="1141" y2="788.7" stroke="#a34242" stroke-width="1.2"/>
<line x1="321" y1="564.5" x2="1131" y2="798.2" stroke="#a34242" stroke-width="1.2"/>
<line x1="312" y1="574.3" x2="1141" y2="813.5" stroke="#a34242" stroke-width="1.2"/>
<line x1="321" y1="589.3" x2="1131" y2="823.1" stroke="#a34242" stroke-width="1.2"/>
<line x1="312" y1="599.1" x2="1141" y2="838.4" stroke="#a34242" stroke-width="1.2"/>
<line x1="321" y1="614.2" x2="1131" y2="847.9" stroke="#a34242" stroke-width="1.2"/>
<line x1="312" y1="624.0" x2="1141" y2="863.2" stroke="#a34242" stroke-width="1.2"/>
<line x1="321" y1="639.0" x2="1131" y2="872.8" stroke="#a34242" stroke-width="1.2"/>
<line x1="312" y1="648.8" x2="1141" y2="888.1" stroke="#a34242" stroke-width="1.2"/>
<line x1="321" y1="663.8" x2="1131" y2="897.6" stroke="#a34242" stroke-width="1.2"/>
<line x1="312" y1="673.7" x2="1141" y2="912.9" stroke="#a34242" stroke-width="1.2"/>
<line x1="321" y1="688.7" x2="1131" y2="922.4" stroke="#a34242" stroke-width="1.2"/>
<line x1="312" y1="698.5" x2="1141" y2="937.7" stroke="#a34242" stroke-width="1.2"/>
<line x1="321" y1="713.5" x2="1131" y2="947.3" stroke="#a34242" stroke-width="1.2"/>
<line x1="312" y1="723.3" x2="1141" y2="962.6" stroke="#a34242" stroke-width="1.2"/>
<line x1="321" y1="738.4" x2="1131" y2="972.1" stroke="#a34242" stroke-width="1.2"/>
<line x1="312" y1="748.2" x2="1141" y2="987.4" stroke="#a34242" stroke-width="1.2"/>
<path d="M316 287 V280 Q316 274 323 274 L1118 502.6 Q1131 510.3 1131 522.3 V532.3" fill="none" stroke="#9c3b3b" stroke-width="1.8"/>
<path d="M330 275.5 L1120 503.5" stroke="#111" stroke-width="1.2" stroke-dasharray="8 12"/>
<path d="M330 742 Q320 744 320 752 V762 Q318 771 330 772.5 L884 932.4" fill="none" stroke="#b5483a" stroke-width="1.3"/>
</g>
<path d="M312.5 280 V772" stroke="#111" stroke-width="1.2" stroke-dasharray="7 6"/>
<path d="M1141.5 520 V1010" stroke="#111" stroke-width="1.2" stroke-dasharray="7 6"/>
<line x1="388" y1="392" x2="388" y2="682" stroke="#7a3434" stroke-width="2.2"/>
<line x1="396.5" y1="386" x2="396.5" y2="676" stroke="#7a3434" stroke-width="1.3"/>
<line x1="734" y1="492" x2="734" y2="780" stroke="#7a3434" stroke-width="1.3"/>
<line x1="739" y1="488" x2="739" y2="778" stroke="#7a3434" stroke-width="2.2"/>
<line x1="746.5" y1="485" x2="746.5" y2="785" stroke="#7a3434" stroke-width="2.2"/>
<line x1="880.5" y1="515" x2="880.5" y2="935" stroke="#7a3434" stroke-width="2.6"/>
<line x1="893" y1="508" x2="893" y2="940" stroke="#7a3434" stroke-width="1.3"/>
<line x1="1058" y1="569" x2="1058" y2="1000" stroke="#7a3434" stroke-width="1.5"/>
<line x1="1070.5" y1="558" x2="1070.5" y2="1003" stroke="#7a3434" stroke-width="2.8"/>
<line x1="326" y1="436" x2="905" y2="587.7" stroke="#9a3c3c" stroke-width="1.05"/>
<line x1="326" y1="440" x2="905" y2="591.7" stroke="#9a3c3c" stroke-width="1.05"/>
<line x1="326" y1="446" x2="905" y2="597.7" stroke="#9a3c3c" stroke-width="1.05"/>
<line x1="326" y1="450" x2="905" y2="601.7" stroke="#9a3c3c" stroke-width="1.05"/>
<line x1="330" y1="617" x2="790" y2="740.3" stroke="#9a3c3c" stroke-width="1.05"/>
<line x1="330" y1="621" x2="790" y2="744.3" stroke="#9a3c3c" stroke-width="1.05"/>
<line x1="330" y1="627" x2="790" y2="750.3" stroke="#9a3c3c" stroke-width="1.05"/>
<line x1="330" y1="631" x2="790" y2="754.3" stroke="#9a3c3c" stroke-width="1.05"/>
<line x1="640" y1="522" x2="1140" y2="663.0" stroke="#9a3c3c" stroke-width="1.05"/>
<line x1="640" y1="527" x2="1140" y2="668.0" stroke="#9a3c3c" stroke-width="1.05"/>
<line x1="640" y1="534" x2="1140" y2="675.0" stroke="#9a3c3c" stroke-width="1.05"/>
<line x1="640" y1="538" x2="1140" y2="679.0" stroke="#9a3c3c" stroke-width="1.05"/>
<line x1="337" y1="483" x2="434.4" y2="411.3" stroke="#8a3434" stroke-width="1.6"/>
<line x1="342.7" y1="490" x2="440.6" y2="418.5" stroke="#8a3434" stroke-width="1.6"/>
<line x1="337" y1="580" x2="425" y2="692" stroke="#8a3434" stroke-width="1.6"/>
<line x1="342" y1="575" x2="431" y2="689" stroke="#8a3434" stroke-width="1.6"/>
<line x1="352" y1="567" x2="440.6" y2="681" stroke="#8a3434" stroke-width="1.6"/>
<line x1="690" y1="488" x2="782" y2="603" stroke="#8a3434" stroke-width="1.6"/>
<line x1="700" y1="484" x2="786" y2="596" stroke="#8a3434" stroke-width="1.6"/>
<line x1="708" y1="490" x2="790" y2="605" stroke="#8a3434" stroke-width="1.6"/>
<line x1="682" y1="760" x2="780" y2="695" stroke="#8a3434" stroke-width="1.6"/>
<line x1="688" y1="768" x2="786" y2="703" stroke="#8a3434" stroke-width="1.6"/>
<line x1="820.8" y1="642.5" x2="952.8" y2="548" stroke="#8a3434" stroke-width="1.6"/>
<line x1="998" y1="576" x2="1110" y2="720" stroke="#8a3434" stroke-width="1.6"/>
<line x1="1011" y1="566" x2="1130" y2="718" stroke="#8a3434" stroke-width="1.6"/>
<rect x="726" y="375.5" width="10" height="13" fill="#fff"/><text x="731" y="386" text-anchor="middle" font-family="Liberation Sans" font-size="10.5" fill="#111">3</text>
<rect x="311" y="503.5" width="10" height="13" fill="#fff"/><text x="316" y="514" text-anchor="middle" font-family="Liberation Sans" font-size="10.5" fill="#111">4</text>
<rect x="974" y="613.5" width="10" height="13" fill="#fff"/><text x="979" y="624" text-anchor="middle" font-family="Liberation Sans" font-size="10.5" fill="#111">3</text>
<rect x="891" y="755.5" width="10" height="13" fill="#fff"/><text x="896" y="766" text-anchor="middle" font-family="Liberation Sans" font-size="10.5" fill="#111">4</text>
<rect x="1057" y="803.5" width="10" height="13" fill="#fff"/><text x="1062" y="814" text-anchor="middle" font-family="Liberation Sans" font-size="10.5" fill="#111">2</text>
<rect x="1140" y="743.5" width="10" height="13" fill="#fff"/><text x="1145" y="754" text-anchor="middle" font-family="Liberation Sans" font-size="10.5" fill="#111">2</text>
<rect x="726" y="873.5" width="10" height="13" fill="#fff"/><text x="731" y="884" text-anchor="middle" font-family="Liberation Sans" font-size="10.5" fill="#111">1</text>
<rect x="974" y="944.5" width="10" height="13" fill="#fff"/><text x="979" y="955" text-anchor="middle" font-family="Liberation Sans" font-size="10.5" fill="#111">1</text>
<path d="M736 899 L757 906 L738 911 Z" fill="#e8772e"/><ellipse cx="740" cy="905" rx="2.5" ry="6" fill="#c25a1a"/>
<path d="M966 603 L944 607 L962 617 Z" fill="#e8772e"/><ellipse cx="961" cy="610" rx="3" ry="7" fill="#b04a12"/>
</svg>
</body></html>
